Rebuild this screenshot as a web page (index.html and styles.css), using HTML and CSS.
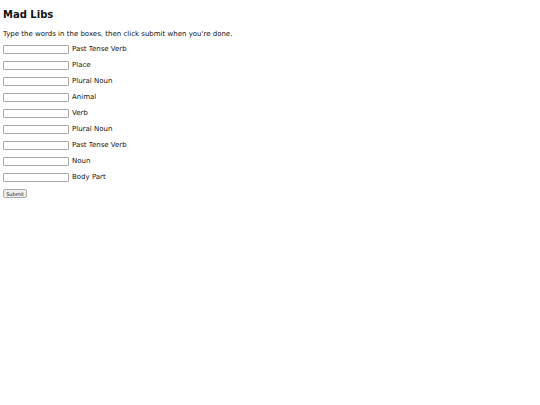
FILE: index.html
```html
<!DOCTYPE html>
<html>
<head>
<meta charset="utf-8">
<link rel="stylesheet" href="styles.css">
</head>
<body>
<h1 class="title">Mad Libs</h1>
<p class="intro">Type the words in the boxes, then click submit when you're done.</p>
<form class="form">
  <div class="row"><input class="box" type="text"><span class="label">Past Tense Verb</span></div>
  <div class="row"><input class="box" type="text"><span class="label">Place</span></div>
  <div class="row"><input class="box" type="text"><span class="label">Plural Noun</span></div>
  <div class="row"><input class="box" type="text"><span class="label">Animal</span></div>
  <div class="row"><input class="box" type="text"><span class="label">Verb</span></div>
  <div class="row"><input class="box" type="text"><span class="label">Plural Noun</span></div>
  <div class="row"><input class="box" type="text"><span class="label">Past Tense Verb</span></div>
  <div class="row"><input class="box" type="text"><span class="label">Noun</span></div>
  <div class="row"><input class="box" type="text"><span class="label">Body Part</span></div>
  <div class="row"><button class="submit" type="button">Submit</button></div>
</form>
</body>
</html>
```
FILE: styles.css
```css
html, body { background: #fff; }
body {
  margin: 0;
  padding: 0 3px;
  font-family: "DejaVu Sans", Verdana, sans-serif;
  font-size: 7px;
  color: #111;
}
.title {
  font-size: 10px;
  font-weight: bold;
  margin: 8px 0 0;
  line-height: 13px;
}
.intro {
  margin: 9px 0 0;
  line-height: 9px;
}
.form {
  display: flex;
  flex-direction: column;
  gap: 7px;
  margin-top: 6px;
}
.row {
  display: flex;
  align-items: center;
  gap: 3px;
  height: 9px;
}
.box {
  width: 66px;
  height: 9px;
  box-sizing: border-box;
  margin: 0;
  padding: 0;
  border: 1px solid #a9a9a9;
  border-radius: 1px;
  background: #fff;
}
.label { line-height: 9px; }
.submit {
  font-family: "DejaVu Sans", Verdana, sans-serif;
  font-size: 5px;
  height: 9px;
  width: 24px;
  padding: 0;
  margin: 0;
  border: 1px solid #aaa;
  border-radius: 2px;
  background: #efefef;
  color: #111;
}
```
